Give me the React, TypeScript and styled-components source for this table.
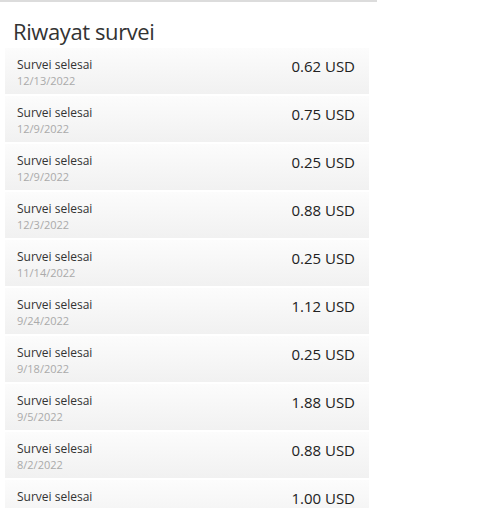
import styled, { createGlobalStyle } from 'styled-components'

const GlobalStyle = createGlobalStyle`
  html, body {
    margin: 0;
    padding: 0;
    background: #fff;
    font-family: 'Open Sans', 'Liberation Sans', sans-serif;
  }
`

const Panel = styled.section`
  width: 377px;
  border-top: 2px solid #dcdcdc;
  overflow: hidden;
  height: 506px;
`

const Title = styled.h2`
  margin: 0;
  padding: 13px 0 0 13px;
  height: 33px;
  font-size: 22px;
  font-weight: 400;
  letter-spacing: -0.4px;
  color: #333;
  line-height: 33px;
`

const List = styled.ul`
  list-style: none;
  margin: 0 8px 0 5px;
  padding: 0;
`

const Row = styled.li`
  display: flex;
  justify-content: space-between;
  height: 46px;
  margin-bottom: 2px;
  padding: 0 14px 0 12px;
  background: linear-gradient(#fcfcfc, #f1f1f1);
`

const Info = styled.div`
  display: flex;
  flex-direction: column;
  padding-top: 9px;
`

const Label = styled.span`
  font-size: 12px;
  line-height: 16px;
  color: #333;
`

const DateText = styled.span`
  font-size: 11px;
  line-height: 16px;
  color: #aaa;
`

const Amount = styled.span`
  padding-top: 8px;
  font-size: 15px;
  line-height: 20px;
  color: #222;
`

const surveys = [
  { date: '12/13/2022', amount: '0.62' },
  { date: '12/9/2022', amount: '0.75' },
  { date: '12/9/2022', amount: '0.25' },
  { date: '12/3/2022', amount: '0.88' },
  { date: '11/14/2022', amount: '0.25' },
  { date: '9/24/2022', amount: '1.12' },
  { date: '9/18/2022', amount: '0.25' },
  { date: '9/5/2022', amount: '1.88' },
  { date: '8/2/2022', amount: '0.88' },
  { date: '', amount: '1.00' },
]

const App = () => {
  return (
    <>
      <GlobalStyle />
      <Panel>
        <Title>Riwayat survei</Title>
        <List>
          {surveys.map((s, i) => (
            <Row key={i}>
              <Info>
                <Label>Survei selesai</Label>
                {s.date && <DateText>{s.date}</DateText>}
              </Info>
              <Amount>{s.amount} USD</Amount>
            </Row>
          ))}
        </List>
      </Panel>
    </>
  )
}

export default App
